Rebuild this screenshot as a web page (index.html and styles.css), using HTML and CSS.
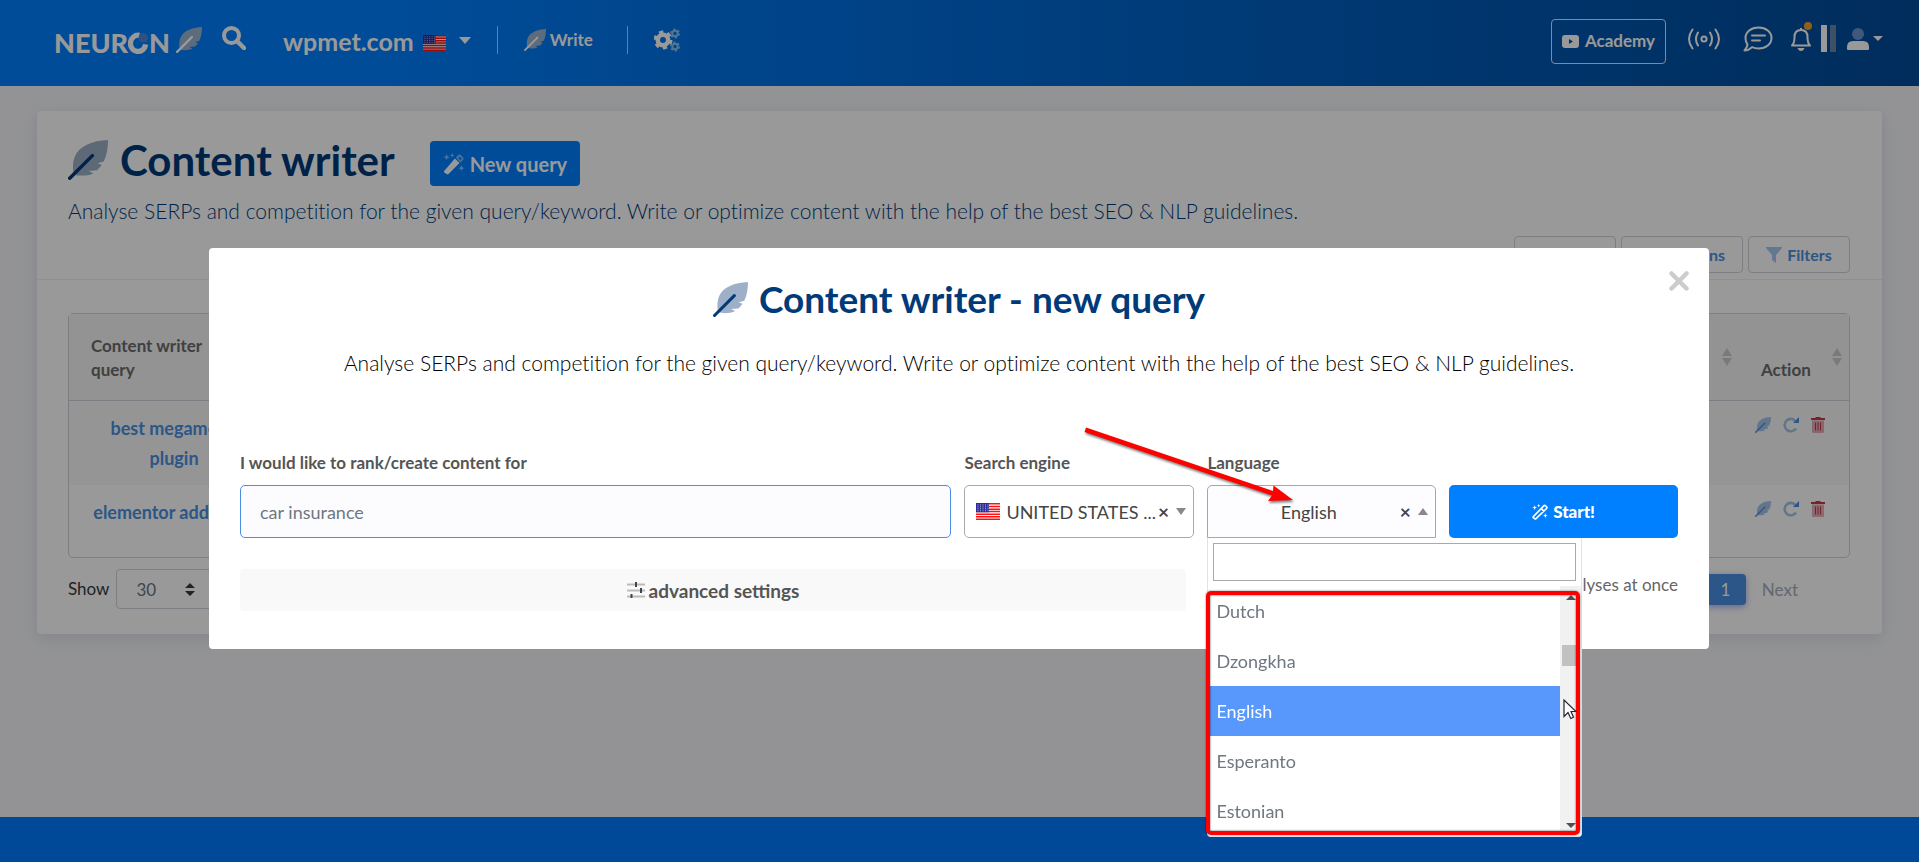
FILE: index.html
```html
<!DOCTYPE html>
<html lang="en">

<head>
  <meta charset="UTF-8" />
  <meta name="viewport" content="width=device-width, initial-scale=1.0" />
  <title>Content writer</title>
  <link rel="stylesheet" href="styles.css">
</head>

<body>
  <!-- shared icons -->
  <svg class="sprite" aria-hidden="true">
    <symbol id="feather" viewBox="0 0 512 512">
      <path class="soft" d="M512 0C310 8 150 78 92 200C62 262 58 350 72 444C150 462 250 462 326 424L262 396L372 386C396 366 416 342 430 318L376 296L458 274C500 190 512 92 512 0Z" />
      <path d="M22 490L312 200" fill="none" stroke="currentColor" stroke-width="44" stroke-linecap="round" />
    </symbol>
    <symbol id="flag" viewBox="0 0 24 22" preserveAspectRatio="none">
      <path fill="#fff" d="M0 0h24v22H0z" />
      <path fill="#f11" d="M0 0h24v2H0zM0 3.5h24v2H0zM0 7h24v2H0zM0 10h24v2H0zM0 13.5h24v2H0zM0 16.8h24v2H0zM0 20h24v2H0z" />
      <path fill="#2b2b9c" d="M0 0h13v12H0z" />
      <path d="M1.5 2.5h11M1.5 5h11M1.5 7.500h11M1.500 10h11" stroke="#c9c9ee" stroke-width="1" stroke-dasharray="1 1.500" />
    </symbol>
    <symbol id="wand-solid" viewBox="0 0 24 24">
      <path d="M1 20L13 6l5 5L6 23q-1 1-2 0l-3-2z" fill="currentColor" />
      <path class="soft" fill-rule="evenodd" d="M14 5l3-3q1-1 2 0l3 3q1 1 0 2l-3 3.500zM16.500 5.500l2.500 2.500 1.500-2-2-2zM4 1l1 2.500L7.500 4.500 5 5.500 4 8 3 5.500.5 4.500 3 3.500zM10 0l.8 1.800 1.700.7-1.700.8L10 5l-.8-1.700-1.700-.8 1.700-.7zM20 13l1 2.500 2.500 1-2.500 1L20 20l-1-2.500-2.500-1 2.500-1z" />
    </symbol>
    <symbol id="wand" viewBox="0 0 24 24">
      <path d="M2 19L18 2.500q1-1 2 0l2 2q1 1 0 2L6 22q-1 1-2 0l-2-1.500q-.7-.7 0-1.500zM14 7l4 4" fill="none" stroke="currentColor" stroke-width="2.400" />
      <path d="M4 2l1 2.500L7.500 5.500 5 6.500 4 9 3 6.500.5 5.500 3 4.500zM10 0l.8 1.800 1.700.7-1.700.8L10 5l-.8-1.700-1.700-.8 1.700-.7zM20 14l1 2.500 2.500 1-2.500 1L20 21l-1-2.500-2.500-1 2.500-1z" fill="currentColor" />
    </symbol>
    <symbol id="refresh" viewBox="0 0 16 16">
      <path class="soft-line" d="M12.500 4A6.200 6.200 0 1 0 13 11.500" fill="none" stroke-width="2.600" />
      <path d="M16 0v6h-6z" fill="currentColor" />
    </symbol>
    <symbol id="trash" viewBox="0 0 14 16">
      <path d="M0 1h4l1-1h4l1 1h4v2H0z" fill="currentColor" />
      <path d="M1 3.500h12V14.500q0 1.500-1.500 1.500h-9Q1 16 1 14.500z" fill="currentColor" opacity=".4" />
      <path d="M4.500 5.500v8M7 5.500v8M9.500 5.500v8" stroke="currentColor" />
    </symbol>
    <symbol id="sort" viewBox="0 0 10 18">
      <path d="M0 8l5-8 5 8zM0 10l5 8 5-8z" fill="currentColor" />
    </symbol>
  </svg>

  <header class="topbar">
    <a class="brand" href="#" aria-label="Neuron">
      NEUR<svg class="brand-o" viewBox="0 0 22 24" aria-hidden="true">
        <path d="M12 3.500A8 8.500 0 1 0 18.500 13" fill="none" stroke="currentColor" stroke-width="5.500" />
        <circle cx="16" cy="6" r="5" fill="#4f86d6" />
      </svg>N
      <svg class="brand-feather" aria-hidden="true"><use href="#feather" /></svg>
    </a>
    <button class="icon-btn search" aria-label="Search">
      <svg width="24" height="24" viewBox="0 0 24 24"><circle cx="9.500" cy="9.500" r="7.500" fill="none" stroke="currentColor" stroke-width="4" /><path d="M15 15l7 7" stroke="currentColor" stroke-width="4.500" stroke-linecap="round" /></svg>
    </button>
    <button class="project">
      wpmet.com
      <svg class="flag" width="23" height="16"><use href="#flag" /></svg>
      <svg class="caret" width="12" height="7" viewBox="0 0 12 7"><path d="M0 0h12L6 7z" fill="currentColor" /></svg>
    </button>
    <nav class="nav">
      <a class="nav-item" href="#"><svg class="nav-feather" width="22" height="22"><use href="#feather" /></svg>Write</a>
      <button class="nav-item icon-btn" aria-label="Settings">
        <svg width="26" height="24" viewBox="0 0 26 24">
          <g fill="none" stroke="currentColor">
            <circle cx="9" cy="12" r="5.200" stroke-width="4.500" />
            <circle cx="9" cy="12" r="8" stroke-width="3" stroke-dasharray="4.200 4.180" />
            <g opacity=".55">
              <circle cx="21" cy="5.500" r="2.700" stroke-width="2" />
              <circle cx="21" cy="5.500" r="4.200" stroke-width="1.600" stroke-dasharray="2.200 2.200" />
              <circle cx="21" cy="18.500" r="2.700" stroke-width="2" />
              <circle cx="21" cy="18.500" r="4.200" stroke-width="1.600" stroke-dasharray="2.200 2.200" />
            </g>
          </g>
        </svg>
      </button>
    </nav>
    <div class="tools">
      <a class="academy" href="#">
        <svg width="17" height="13" viewBox="0 0 17 13"><rect width="17" height="13" rx="3" fill="currentColor" /><path d="M7 4l4 2.500L7 9z" fill="#0056b5" /></svg>
        Academy
      </a>
      <div class="tool-icons">
        <button class="icon-btn live" aria-label="Live">
          <svg width="34" height="22" viewBox="0 0 34 22" fill="none" stroke="currentColor" stroke-width="2" stroke-linecap="round">
            <circle cx="17" cy="11" r="2.600" /><path d="M11 4.500Q7 11 11 17.500M23 4.500Q27 11 23 17.500M5.500 1.500Q-1.500 11 5.500 20.500M28.500 1.500Q35.500 11 28.500 20.500" />
          </svg>
        </button>
        <button class="icon-btn chat" aria-label="Chat">
          <svg width="30" height="26" viewBox="0 0 30 26" fill="none" stroke="currentColor" stroke-width="2" stroke-linecap="round" stroke-linejoin="round">
            <path d="M15.500 1.500C23 1.500 28.500 6 28.500 12S23 22.500 15.500 22.500Q12 22.500 9 21.200Q6 24.500 1.500 24.500Q4 22 4.500 18.500Q2.500 15.500 2.500 12C2.500 6 8 1.500 15.500 1.500Z" /><path d="M9 9.500h13M9 14.500h8" />
          </svg>
        </button>
        <button class="icon-btn bell" aria-label="Notifications">
          <svg width="22" height="24" viewBox="0 0 22 24"><path d="M2 18.500Q4.500 16 4.500 10Q4.500 3 11 3T17.500 10Q17.500 16 20 18.500ZM11 3V1" fill="none" stroke="currentColor" stroke-width="2" stroke-linejoin="round" /><path d="M7.500 21h7q-1 3-3.500 3t-3.500-3z" fill="currentColor" /></svg>
          <span class="bell-dot"></span>
        </button>
        <span class="usage"><i class="usage-bar"></i><i class="usage-bar dim"></i></span>
        <button class="icon-btn user" aria-label="Account">
          <svg width="22" height="22" viewBox="0 0 22 22"><circle cx="11" cy="6" r="6" fill="#6a93cf" /><path d="M1 22q-1 0-1-1v-2q0-6 6-6h10q6 0 6 6v2q0 1-1 1z" fill="currentColor" /></svg>
          <svg width="10" height="5" viewBox="0 0 10 5"><path d="M0 0h10L5 5z" fill="currentColor" /></svg>
        </button>
      </div>
    </div>
  </header>

  <main class="page">
    <section class="card">
      <div class="card-head">
        <div class="title-row">
          <h1><svg class="title-feather" aria-hidden="true"><use href="#feather" /></svg>Content writer</h1>
          <button class="btn-new"><svg width="22" height="22"><use href="#wand-solid" /></svg>New query</button>
        </div>
        <p class="lead">Analyse SERPs and competition for the given query/keyword. Write or optimize content with the help of the best SEO &amp; NLP guidelines.</p>
        <div class="actions">
          <button class="btn-line">Export</button>
          <button class="btn-line columns">Columns</button>
          <button class="btn-line"><svg width="16" height="16" viewBox="0 0 16 16"><path class="soft" d="M0 0h16v1L10 8v8l-4-3V8L0 1z" /></svg>Filters</button>
        </div>
      </div>

      <table class="queries">
        <thead>
          <tr>
            <th class="col-query">Content writer query</th>
            <th><svg class="sort" width="10" height="18"><use href="#sort" /></svg></th>
            <th class="col-action">Action<svg class="sort" width="10" height="18"><use href="#sort" /></svg></th>
          </tr>
        </thead>
        <tbody>
          <tr>
            <td><a href="#">best megamenu plugin</a></td>
            <td></td>
            <td class="row-icons">
              <a href="#" aria-label="Write"><svg width="16" height="16"><use href="#feather" /></svg></a>
              <a href="#" aria-label="Refresh"><svg width="16" height="16"><use href="#refresh" /></svg></a>
              <a class="danger" href="#" aria-label="Delete"><svg width="14" height="16"><use href="#trash" /></svg></a>
            </td>
          </tr>
          <tr>
            <td><a href="#">elementor addon kit</a></td>
            <td></td>
            <td class="row-icons">
              <a href="#" aria-label="Write"><svg width="16" height="16"><use href="#feather" /></svg></a>
              <a href="#" aria-label="Refresh"><svg width="16" height="16"><use href="#refresh" /></svg></a>
              <a class="danger" href="#" aria-label="Delete"><svg width="14" height="16"><use href="#trash" /></svg></a>
            </td>
          </tr>
        </tbody>
      </table>

      <div class="table-foot">
        <label for="rows">Show</label>
        <span class="rows-box">
          <select id="rows"><option>30</option></select>
          <svg width="10" height="13" viewBox="0 0 10 13"><path d="M0 5l5-5 5 5zM0 8l5 5 5-5z" fill="#343a40" /></svg>
        </span>
        <div class="pager">
          <button class="page-no">1</button>
          <button class="page-next">Next</button>
        </div>
      </div>
    </section>
  </main>

  <footer class="footer"></footer>

  <div class="overlay">
    <div class="modal" role="dialog" aria-labelledby="modalTitle">
      <button class="close" aria-label="Close">
        <svg width="20" height="20" viewBox="0 0 20 20"><path d="M2.500 2.500l15 15M17.500 2.500l-15 15" stroke="currentColor" stroke-width="4.500" stroke-linecap="round" /></svg>
      </button>
      <h2 id="modalTitle"><svg class="modal-feather" aria-hidden="true"><use href="#feather" /></svg>Content writer - new query</h2>
      <p class="modal-lead">Analyse SERPs and competition for the given query/keyword. Write or optimize content with the help of the best SEO &amp; NLP guidelines.</p>

      <form class="query-form">
        <div class="field">
          <label for="keyword">I would like to rank/create content for</label>
          <input class="control" id="keyword" type="text" placeholder="car insurance" />
        </div>
        <div class="field">
          <label for="engine">Search engine</label>
          <div class="control picker">
            <svg class="picker-flag" width="24" height="17"><use href="#flag" /></svg>
            <select id="engine"><option>UNITED STATES ...</option></select>
            <button class="clear" type="button" aria-label="Clear search engine">×</button>
            <svg width="10" height="7" viewBox="0 0 10 7"><path d="M0 0h10L5 7z" fill="#888" /></svg>
          </div>
        </div>
        <div class="field">
          <label for="language">Language</label>
          <div class="control picker open">
            <select id="language"><option>English</option></select>
            <button class="clear" type="button" aria-label="Clear language">×</button>
            <svg width="10" height="7" viewBox="0 0 10 7"><path d="M0 7h10L5 0z" fill="#888" /></svg>
          </div>

          <div class="dropdown">
            <input class="dropdown-search" type="text" aria-label="Search language" />
            <div class="list-wrap">
              <ul class="options" role="listbox" aria-label="Language">
                <li role="option">Dutch</li>
                <li role="option">Dzongkha</li>
                <li class="active" role="option" aria-selected="true">English</li>
                <li role="option">Esperanto</li>
                <li role="option">Estonian</li>
              </ul>
              <div class="scrollbar">
                <svg width="10" height="5" viewBox="0 0 10 5"><path d="M0 5h10L5 0z" fill="#505050" /></svg>
                <span class="thumb"></span>
                <svg width="10" height="5" viewBox="0 0 10 5"><path d="M0 0h10L5 5z" fill="#505050" /></svg>
              </div>
              <div class="frame"></div>
              <svg class="cursor" width="14" height="21" viewBox="0 0 14 21"><path d="M1 1v16.500l4-4 2.800 6 2.700-1.200L8 12.500h5z" fill="#fff" stroke="#223" stroke-width="1.200" /></svg>
            </div>
          </div>
          <svg class="arrow" width="214" height="80" viewBox="0 0 214 80"><path d="M5 1.500L192 65 192.500 59.500 212 74 187 75 191 69.500 3.500 6z" fill="#f00" /></svg>
        </div>
        <button class="btn-start" type="button"><svg width="16" height="16"><use href="#wand" /></svg>Start!</button>
      </form>

      <div class="modal-foot">
        <button class="advanced" type="button">
          <svg width="18" height="16" viewBox="0 0 18 16"><path d="M0 2.500h18M0 8.500h18M0 14.500h18" stroke="#bbb" stroke-width="2" /><path d="M9 0v5M14 6v5M4.500 12v4" stroke="#444" stroke-width="2" /></svg>
          advanced settings
        </button>
        <a class="bulk" href="#">run analyses at once</a>
      </div>
    </div>
  </div>
</body>

</html>
```
FILE: styles.css
```css
* {
  box-sizing: border-box;
}

body {
  margin: 0;
  min-height: 100vh;
  display: flex;
  flex-direction: column;
  font-family: Lato, sans-serif;
  font-size: 17px;
  line-height: 24px;
  color: #343a40;
  background: #f5f6f8;
  font-variant-ligatures: none;
}

button,
input,
select {
  font-family: inherit;
  font-size: inherit;
  color: inherit;
}

button {
  border: 0;
  padding: 0;
  background: none;
  cursor: pointer;
}

a {
  color: inherit;
  text-decoration: none;
}

svg {
  flex: none;
  display: block;
}

select {
  appearance: none;
  border: 0;
  background: none;
  outline: none;
}

.sprite {
  position: absolute;
  width: 0;
  height: 0;
}

.soft {
  fill: var(--soft, #9db0c8);
}

.soft-line {
  stroke: var(--soft, #9db0c8);
}

/* top bar */

.topbar {
  height: 86px;
  padding: 0 36px 6px 54px;
  display: flex;
  align-items: center;
  color: #fff;
  background: linear-gradient(90deg, #007fff 20%, #004b99 100%);
  --soft: #9cb4d0;
}

.brand {
  display: flex;
  align-items: center;
  font-size: 27px;
  font-weight: 900;
  line-height: 32px;
  padding-top: 6px;
}

.brand-o {
  width: 21px;
  height: 23px;
}

.brand-feather {
  width: 26px;
  height: 26px;
  margin: -6px 0 0 6px;
}

.icon-btn {
  display: flex;
  align-items: center;
}

.search {
  margin: 0 0 4px 20px;
}

.project {
  display: flex;
  align-items: center;
  margin-left: 37px;
  padding-top: 2px;
  font-size: 25px;
  font-weight: 700;
}

.flag {
  margin: 4px 13px 0 9px;
}

.caret {
  margin-bottom: 2px;
}

.nav {
  display: flex;
  margin-left: 26px;
}

.nav-item {
  display: flex;
  align-items: center;
  height: 28px;
  padding: 0 34px 0 26px;
  border-left: 1px solid #c8cdd4;
  color: #fff;
  font-weight: 700;
}

.nav-feather {
  margin-right: 4px;
}

.tools {
  margin-left: auto;
  display: flex;
  align-items: center;
}

.academy {
  display: flex;
  align-items: center;
  gap: 6px;
  height: 45px;
  margin: 2px 21px 0 0;
  padding: 0 10px;
  border: 1px solid #dfe6ef;
  border-radius: 4px;
  font-weight: 700;
}

.tool-icons {
  display: flex;
  align-items: center;
  margin-bottom: 3px;
}

.live {
  margin-right: 22px;
}

.chat {
  margin-right: 17px;
}

.bell {
  position: relative;
  margin-right: 9px;
}

.bell-dot {
  position: absolute;
  top: -5px;
  right: 0;
  width: 8px;
  height: 8px;
  border-radius: 50%;
  background: #f0a02a;
}

.usage {
  display: flex;
  gap: 3px;
  margin-right: 11px;
}

.usage-bar {
  width: 6px;
  height: 27px;
  background: #fff;
}

.usage-bar.dim {
  background: #6886ab;
}

.user {
  gap: 4px;
}

/* page card */

.page {
  flex: 1;
  padding: 25px 37px;
}

.card {
  background: #fff;
  border-radius: 4px;
  box-shadow: 0 4px 16px rgba(120, 130, 160, 0.2);
  padding-bottom: 25px;
}

.card-head {
  padding: 22px 32px 6px 31px;
  border-bottom: 1px solid #eee;
}

.title-row {
  display: flex;
  align-items: center;
}

h1,
h2 {
  margin: 0;
  display: flex;
  align-items: center;
  color: #003a78;
  font-weight: 700;
}

h1 {
  font-size: 42px;
  line-height: 52px;
}

.title-feather {
  width: 40px;
  height: 40px;
  margin-right: 12px;
}

.btn-new {
  display: flex;
  align-items: center;
  gap: 5px;
  height: 45px;
  margin: 8px 0 0 35px;
  padding: 0 13px;
  border-radius: 4px;
  background: #007fff;
  color: #fff;
  font-size: 20px;
  font-weight: 700;
  --soft: #80bfff;
}

.lead {
  margin: 10px 0;
  font-size: 21px;
  font-weight: 300;
  line-height: 30px;
  color: #003a78;
}

.actions {
  display: flex;
  justify-content: flex-end;
  gap: 5px;
}

.btn-line {
  display: flex;
  align-items: center;
  justify-content: center;
  gap: 5px;
  height: 37px;
  padding: 0 17px;
  min-width: 102px;
  border: 1px solid #ced4da;
  border-radius: 4px;
  color: #4a90e2;
  font-size: 16px;
  font-weight: 700;
  --soft: #a3c8f0;
}

.columns {
  min-width: 122px;
  justify-content: flex-end;
}

.queries {
  width: calc(100% - 63px);
  margin: 33px 32px 0 31px;
  border: 1px solid #ced4da;
  border-radius: 5px;
  border-spacing: 0;
  table-layout: fixed;
}

.queries th {
  position: relative;
  height: 87px;
  padding: 18px 22px;
  text-align: left;
  vertical-align: bottom;
  background: #f5f5f5;
  border-bottom: 1px solid #ced4da;
  color: #6b6b6b;
  font-weight: 700;
}

.queries .col-query {
  width: 210px;
  padding-right: 50px;
}

.col-action {
  width: 110px;
}

.sort {
  position: absolute;
  top: 34px;
  right: 7px;
  color: #ccc;
}

.queries td {
  height: 72px;
  padding: 12px 18px;
  text-align: center;
  vertical-align: top;
  color: #4a90e2;
  font-size: 18px;
  font-weight: 700;
  line-height: 30px;
  --soft: #a3c3e8;
}

.queries tbody tr:first-child {
  background: #f9f9f9;
}

.queries .row-icons {
  padding: 12px 14px 12px 6px;
  white-space: nowrap;
}

.row-icons a {
  display: inline-block;
  margin: 4px 4px 0;
  vertical-align: top;
}

.danger {
  color: #c8364a;
}

.table-foot {
  display: flex;
  align-items: center;
  margin: 11px 32px 0 31px;
}

.rows-box {
  display: flex;
  align-items: center;
  width: 106px;
  height: 40px;
  margin-left: 7px;
  padding: 0 26px 0 19px;
  border: 1px solid #ced4da;
  border-radius: 4px;
  color: #6c757d;
}

.rows-box select {
  flex: 1;
  width: 100%;
  padding: 0;
}

.pager {
  display: flex;
  gap: 16px;
  margin-left: auto;
  padding-right: 52px;
}

.page-no {
  width: 41px;
  height: 31px;
  border-radius: 4px;
  background: #4a90e2;
  box-shadow: 0 2px 6px rgba(80, 90, 220, 0.5);
  color: #fff;
}

.page-next {
  color: #a5aeb8;
}

.footer {
  height: 45px;
  background: #007bff;
}

/* modal */

.overlay {
  position: fixed;
  inset: 0;
  padding: 248px 210px 0 209px;
  background: rgba(0, 0, 0, 0.4);
}

.modal {
  position: relative;
  padding: 26px 31px 38px;
  border-radius: 4px;
  background: #fff;
}

.close {
  position: absolute;
  top: 23px;
  right: 20px;
  color: #ccc;
}

.modal h2 {
  justify-content: center;
  font-size: 37px;
  line-height: 50px;
}

.modal-feather {
  width: 35px;
  height: 35px;
  margin-right: 11px;
}

.modal-lead {
  margin: 24px 0 73px;
  text-align: center;
  font-size: 21px;
  font-weight: 300;
  line-height: 30px;
  color: #000;
}

.query-form {
  display: grid;
  grid-template-columns: 712fr 229fr 229fr 229fr;
  gap: 13px;
  align-items: end;
}

.field {
  position: relative;
}

.field label {
  display: block;
  margin-bottom: 10px;
  color: #555;
  font-weight: 700;
}

.control {
  width: 100%;
  height: 53px;
  border: 1px solid #aaa;
  border-radius: 5px;
}

input.control {
  display: block;
  padding: 0 19px;
  border-color: #4a90e2;
  background: #fcfcff;
  font-size: 18px;
}

input::placeholder {
  color: #6f7780;
}

.picker {
  display: flex;
  align-items: center;
  padding: 0 7px 0 11px;
  color: #444;
}

.picker select {
  flex: 1;
  min-width: 0;
  padding: 0;
  font-size: 18px;
}

.picker-flag {
  margin-right: 6px;
}

.open {
  border-color: #949ff5;
  border-radius: 5px 5px 0 0;
  background: #fdfdff;
}

.open select {
  text-align-last: center;
}

.clear {
  width: 14px;
  margin-right: 6px;
  font-size: 19px;
  font-weight: 700;
}

.btn-start {
  display: flex;
  align-items: center;
  justify-content: center;
  gap: 5px;
  height: 53px;
  border-radius: 5px;
  background: #007fff;
  color: #fff;
  font-weight: 900;
}

.modal-foot {
  display: flex;
  justify-content: space-between;
  margin-top: 31px;
}

.advanced {
  flex: 0 0 946px;
  display: flex;
  align-items: center;
  justify-content: center;
  gap: 4px;
  height: 42px;
  border-radius: 4px;
  background: #f9f9f9;
  color: #555;
  font-size: 19px;
  font-weight: 700;
}

.bulk {
  padding-top: 4px;
  color: #666;
}

/* language dropdown */

.dropdown {
  position: absolute;
  z-index: 2;
  top: 100%;
  left: 0;
  width: 375px;
  border: 1px solid #dfe1f8;
  border-top: 0;
  border-radius: 0 0 4px 4px;
  background: #fff;
}

.dropdown-search {
  display: block;
  width: 363px;
  height: 38px;
  margin: 5px;
  border: 1px solid #aaa;
}

.list-wrap {
  position: relative;
  display: flex;
}

.options {
  flex: 1;
  margin: 0;
  padding: 0;
  list-style: none;
}

.options li {
  height: 50px;
  padding: 0 8px;
  line-height: 50px;
  font-size: 18px;
  color: #6f7780;
}

.options .active {
  background: #5897fb;
  color: #fff;
}

.scrollbar {
  width: 21px;
  display: flex;
  flex-direction: column;
  align-items: center;
  padding: 9px 0 8px;
  background: #f1f1f1;
}

.thumb {
  width: 17px;
  height: 21px;
  margin: 45px 0 auto;
  background: #c1c1c1;
}

.frame {
  position: absolute;
  inset: 5px 1px 1px -2px;
  border: 4px solid #f00;
  border-radius: 5px;
  box-shadow: 0 0 2px rgba(0, 0, 0, 0.6), inset 0 0 2px rgba(0, 0, 0, 0.8);
}

.cursor {
  position: absolute;
  top: 113px;
  right: 4px;
}

.arrow {
  position: absolute;
  z-index: 3;
  top: -25px;
  left: -126px;
  filter: drop-shadow(1px 2px 1px rgba(0, 0, 0, 0.5));
}
```
